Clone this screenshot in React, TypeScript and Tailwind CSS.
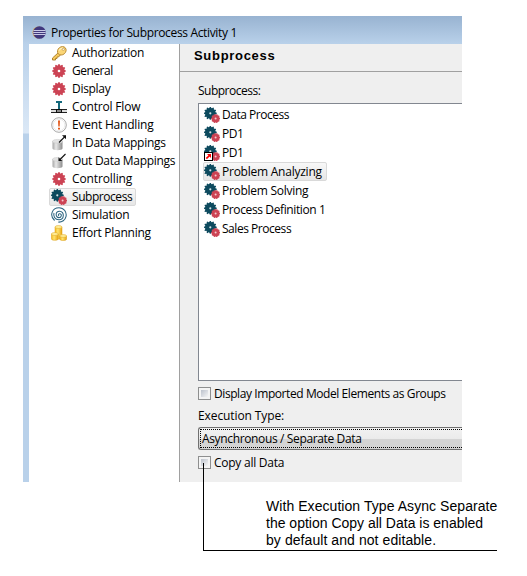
import React from "react";

const teeth = (n: number, c: number, ro: number, ri: number) =>
  Array.from({ length: n * 4 }, (_, i) => {
    const a = ((i - 0.5) / (n * 4)) * Math.PI * 2;
    const r = i % 4 < 2 ? ro : ri;
    return `${(c + r * Math.cos(a)).toFixed(2)},${(c + r * Math.sin(a)).toFixed(2)}`;
  }).join(" ");

const Svg = ({ children }: { children: React.ReactNode }) => (
  <svg width="16" height="16" viewBox="0 0 16 16" className="block shrink-0">{children}</svg>
);

const Gear = () => (
  <Svg>
    <polygon points={teeth(12, 8, 6.9, 5.7)} fill="#cc4354" />
    <circle cx="8" cy="8" r="1.3" fill="#fff" />
  </Svg>
);

const Gears = ({ link = false }: { link?: boolean }) => (
  <Svg>
    <polygon points={teeth(12, 6.3, 6.5, 5.3)} fill="#0d4a5e" />
    <circle cx="6.3" cy="6.3" r="1.1" fill="#d5e2e6" />
    <g transform="translate(7.2 7.2)">
      <polygon points={teeth(10, 4.4, 4.6, 4)} fill="#cc4354" />
      <circle cx="4.4" cy="4.4" r="1" fill="#f3c8cd" />
    </g>
    {link && (
      <g>
        <rect x="0.5" y="7.5" width="8" height="8" fill="#fff" stroke="#000" />
        <path d="M2.300 13.700L6 10" stroke="#f00" strokeWidth="1.7" />
        <path d="M3 9h4v4z" fill="#f00" />
      </g>
    )}
  </Svg>
);

const Key = () => (
  <Svg>
    <path d="M7.5 7.5L1.5 13v2h3v-1.5H6V12h1.5l2-2.2z" fill="#f5c95e" stroke="#a87a22" strokeWidth=".9" />
    <ellipse cx="10.8" cy="5.8" rx="4.6" ry="3.9" transform="rotate(-40 10.8 5.8)" fill="#fbd676" stroke="#b88a35" strokeWidth=".9" />
    <path d="M8 5.5Q9 3 12 2.8" fill="none" stroke="#fff0bd" strokeWidth="1.2" />
    <circle cx="12.3" cy="4.3" r="1.1" fill="#fff" stroke="#b88a35" strokeWidth=".6" />
  </Svg>
);

const Flow = () => (
  <Svg>
    <path d="M5 3h6M8 3v7" fill="none" stroke="#14697c" strokeWidth="2" />
    <path d="M0 10.5h16M0 13.5h16" stroke="#222" />
    <path d="M0 12h16" stroke="#ddd" strokeWidth="2" />
    <rect x="5" y="10" width="6" height="4" fill="#111" />
    <path d="M6 12h4" stroke="#ddd" strokeWidth="1.2" />
  </Svg>
);

const Event = () => (
  <Svg>
    <circle cx="8" cy="8" r="7.3" fill="#fff" stroke="#a8a8a8" />
    <circle cx="8" cy="8" r="5.8" fill="#fff" stroke="#e0e0e0" strokeWidth=".6" />
    <path d="M7 3.5h2l-.3 6H7.3zM7 10.700h2v1.800H7z" fill="#e35a1c" />
  </Svg>
);

const Mapping = ({ out = false }: { out?: boolean }) => (
  <Svg>
    <defs>
      <linearGradient id="cyl"><stop stopColor="#a5a5a5" /><stop offset=".35" stopColor="#e8e8e8" /><stop offset="1" stopColor="#8d8d8d" /></linearGradient>
    </defs>
    <path d="M1.5 6v7.5c0 2.3 10 2.3 10 0V6z" fill="url(#cyl)" />
    <ellipse cx="6.5" cy="6.3" rx="5" ry="1.9" fill="#e2e2e2" stroke="#c6c6c6" strokeWidth=".5" />
    <path d="M8 7.500L14.5 1" stroke="#111" strokeWidth="1.1" />
    {out ? <path d="M7.500 8V4.200L11.300 8z" fill="#111" /> : <path d="M15 .3v4L11 .3z" fill="#111" />}
  </Svg>
);

const Spiral = () => (
  <Svg>
    <g fill="none" stroke="#2c6480" strokeWidth="1.05">
      <path d="M8 8.800C6.800 8.200 7.500 6.400 9 6.700C11.200 7.200 10.500 10.600 8 10.600C4.200 10.600 4 4.300 8.600 4.300C13.800 4.300 13.500 12.800 8 12.800C3.800 12.800 2 9 3 6" />
      <path d="M3.600 13.500C-2 8.500 1.200 .9 8 .8C13 .8 16 5.200 15 9.600C14.200 13 11 15.400 7.300 15.100" />
    </g>
  </Svg>
);

const Coins = () => (
  <Svg>
    <defs>
      <linearGradient id="gold"><stop stopColor="#f5b920" /><stop offset=".4" stopColor="#ffe46e" /><stop offset="1" stopColor="#e9a414" /></linearGradient>
    </defs>
    <g fill="url(#gold)" stroke="#d99d15" strokeWidth=".5">
      <path d="M4 2v11c0 1.500 7 1.500 7 0V2z" />
      <path d="M.4 9v4.800c0 2 6.800 2 6.800 0V9z" />
      <path d="M8.800 11v3c0 2 6.800 2 6.800 0v-3z" />
    </g>
    <g fill="#ffed96" stroke="#dda21c" strokeWidth=".5">
      <ellipse cx="7.500" cy="2" rx="3.500" ry="1.500" />
      <ellipse cx="3.800" cy="9" rx="3.400" ry="1.500" />
      <ellipse cx="12.200" cy="11" rx="3.400" ry="1.400" />
    </g>
  </Svg>
);

const Eclipse = () => (
  <svg width="14" height="14" viewBox="0 0 14 14" className="block shrink-0">
    <circle cx="6.500" cy="6.500" r="6" fill="#dba64d" />
    <circle cx="7.500" cy="6.500" r="6.300" fill="#41387e" />
    <path d="M1.500 4.500h12M1.200 6.500h12.500M1.500 8.500h12" stroke="#c9c9e6" strokeWidth="1" />
  </svg>
);

const nav: [React.ReactNode, string, string][] = [
  [<Key />, "Authorization", "tracking-[-0.3px]"],
  [<Gear />, "General", "tracking-[-0.5px]"],
  [<Gear />, "Display", "tracking-[-0.3px]"],
  [<Flow />, "Control Flow", "tracking-[-0.17px]"],
  [<Event />, "Event Handling", "tracking-[-0.2px]"],
  [<Mapping />, "In Data Mappings", "tracking-[-0.27px]"],
  [<Mapping out />, "Out Data Mappings", "tracking-[-0.3px]"],
  [<Gear />, "Controlling", "tracking-[-0.12px]"],
  [<Gears />, "Subprocess", "tracking-[-0.45px]"],
  [<Spiral />, "Simulation", "tracking-[-0.22px]"],
  [<Coins />, "Effort Planning", "tracking-[-0.27px]"],
];

const items: [string, string][] = [
  ["Data Process", "tracking-[-0.48px]"],
  ["PD1", "tracking-[-0.5px]"],
  ["PD1", "tracking-[-0.5px]"],
  ["Problem Analyzing", "tracking-[-0.24px]"],
  ["Problem Solving", "tracking-[-0.27px]"],
  ["Process Definition 1", "tracking-[-0.38px]"],
  ["Sales Process", "tracking-[-0.46px]"],
];

const Check = () => (
  <span className="box-border flex size-[13px] shrink-0 border border-[#8e8f8f] bg-[#f4f4f4] p-[2px]">
    <span className="flex-1 bg-linear-to-br from-[#bcc2cc] to-[#f5f5f5]" />
  </span>
);

export default function App() {
  return (
    <div className="relative h-[576px] w-[527px] overflow-hidden bg-white pt-4 pl-[23px] font-['Open_Sans','Noto_Sans',sans-serif] text-[12px] leading-[18px] whitespace-nowrap text-black">
      <div className="flex h-[466px] w-[439px] flex-col overflow-hidden bg-[#efefef]">
        <div className="flex h-7 shrink-0 items-center bg-linear-to-b from-[#98b3d1] to-[#b9d1ea] pt-[5px] pl-[9px]">
          <Eclipse />
          <span className="ml-[5px] tracking-[-0.34px]">Properties for Subprocess Activity 1</span>
        </div>
        <div className="flex min-h-0 flex-1">
          <div className="w-1.5 bg-linear-to-b from-[#b9d1ea] from-0% via-[#dbe8f6] via-[89px] to-[#b9d1ea] to-[90px]" />
          <nav className="w-[151px] shrink-0 border-r border-[#a0a0a0] bg-white">
            {nav.map(([icon, label, fit]) => (
              <div key={label} className="flex h-[18px] pl-5">
                <div className={`box-border flex h-[18px] items-center rounded-[2px] border pr-[3px] pl-px ${label === "Subprocess" ? "border-[#d9d9d9] bg-linear-to-b from-[#f8f8f8] to-[#e6e6e6]" : "border-transparent"}`}>
                  {icon}
                  <span className={`ml-[5px] ${fit}`}>{label}</span>
                </div>
              </div>
            ))}
          </nav>
          <main className="flex min-w-0 flex-1 flex-col">
            <h1 className="h-7 shrink-0 border-b border-[#a0a0a0] pl-[14px] font-['Liberation_Sans',sans-serif] text-[13px] leading-[24px] font-bold tracking-[0.7px]">Subprocess</h1>
            <div className="flex flex-1 flex-col pl-[18px]">
              <div className="mt-2.5 h-[21px] tracking-[-0.5px]">Subprocess:</div>
              <div className="h-[278px] shrink-0 border border-r-0 border-[#828790] bg-white pt-px pl-[4px]">
                {items.map(([label, fit], i) => (
                  <div key={i} className="flex h-[19px]">
                    <div className={`box-border flex h-[19px] items-center rounded-[2px] border pr-[4px] ${i === 3 ? "border-[#d9d9d9] bg-linear-to-b from-[#f8f8f8] to-[#e6e6e6]" : "border-transparent"}`}>
                      <Gears link={i === 2} />
                      <span className={`ml-[2px] ${fit}`}>{label}</span>
                    </div>
                  </div>
                ))}
              </div>
              <label className="mt-1 flex h-[17px] items-center gap-[3px] tracking-[-0.42px]"><Check /><span>Display Imported Model Elements as Groups</span></label>
              <div className="mt-[5px] h-5 tracking-[-0.1px]">Execution Type:</div>
              <div className="h-[23px] rounded-l-[3px] border border-r-0 border-[#707070] bg-linear-to-b from-[#f2f2f2] from-0% via-[#ebebeb] via-50% to-[#d4d4d4] to-52% p-px pr-0">
                <div className="flex h-[19px] items-center border border-r-0 border-dotted border-black pl-px"><span className="tracking-[-0.36px]">Asynchronous / Separate Data</span></div>
              </div>
              <label className="mt-[3px] flex h-[19px] items-center gap-[3px] tracking-[-0.25px]"><Check /><span className="pt-px">Copy all Data</span></label>
            </div>
          </main>
        </div>
      </div>
      <div className="absolute top-[463px] left-[203px] box-border h-[88px] w-[294px] border-b border-l border-black" />
      <p className="mt-4 ml-[243px] font-['Liberation_Sans',sans-serif] text-[14px] leading-[17px]">
        <span className="tracking-[0.06px]">With Execution Type Async Separate</span><br />the option Copy all Data is enabled<br />
        <span className="tracking-[0.07px]">by default and not editable.</span>
      </p>
    </div>
  );
}
